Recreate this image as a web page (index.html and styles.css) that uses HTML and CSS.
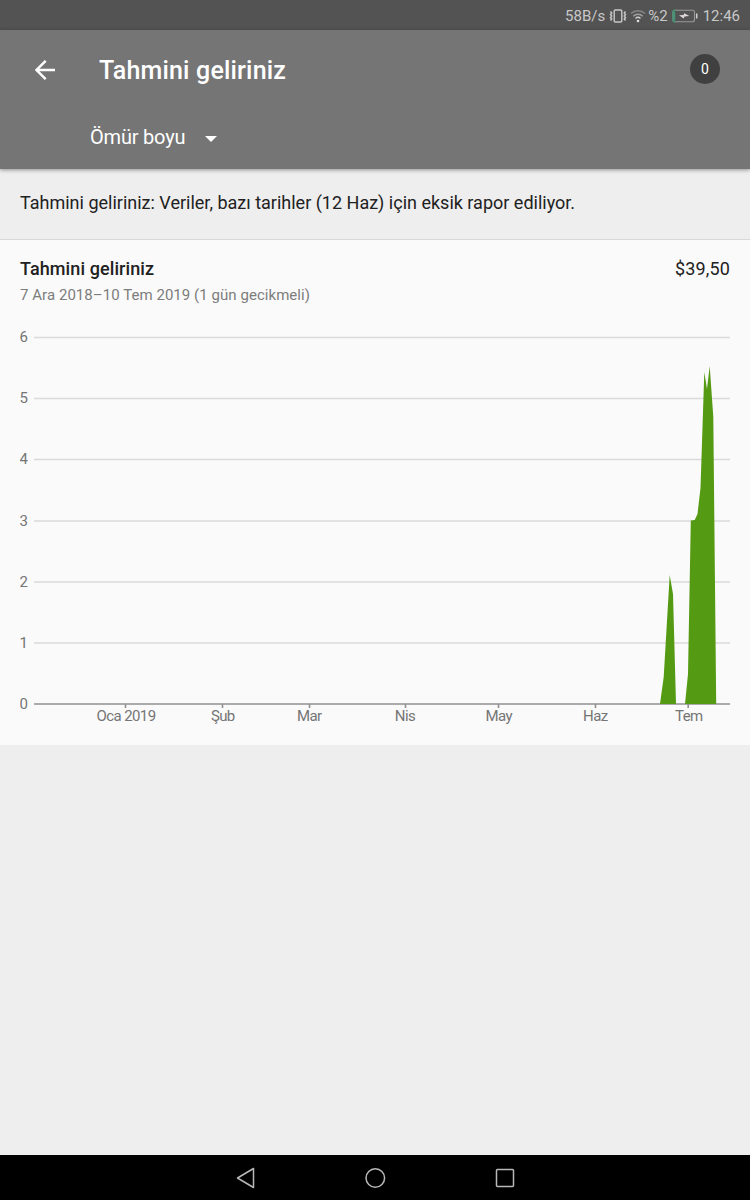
FILE: index.html
```html
<!DOCTYPE html>
<html lang="tr">

<head>
    <meta charset="UTF-8">
    <meta name="viewport" content="width=device-width, initial-scale=1.0">
    <title>Tahmini geliriniz</title>
    <link rel="stylesheet" href="styles.css">
</head>

<body>
    <div class="status-bar">
        <span class="speed">58B/s</span>
        <svg class="vibrate" width="18" height="14" viewBox="0 0 18 14" fill="none" stroke="#c8c8c8">
            <rect x="5.2" y="1" width="7.6" height="12" rx="1" stroke-width="1.4"/>
            <path d="M1.5 2.5l1.2 1.5-1.2 1.5 1.2 1.5-1.2 1.5 1.2 1.5-1.2 1.5M16.5 2.5l-1.2 1.5 1.2 1.5-1.2 1.5 1.2 1.5-1.2 1.5 1.2 1.5" stroke-width="1.5"/>
        </svg>
        <svg class="wifi" width="16" height="14" viewBox="0 0 16 14" fill="none" stroke-width="1.4">
            <path d="M1 4.6a10 10 0 0 1 14 0" stroke="#858585"/>
            <path d="M3.3 7.2a6.8 6.8 0 0 1 9.4 0" stroke="#a0a0a0"/>
            <path d="M5.5 9.4a3.7 3.7 0 0 1 5 0" stroke="#d0d0d0"/>
            <circle cx="8" cy="12" r="1.3" fill="#e0e0e0"/>
        </svg>
        <span class="percent">%2</span>
        <svg class="battery" width="26" height="14" viewBox="0 0 26 14">
            <rect x="1" y="1.2" width="21.5" height="11.6" rx="2" fill="none" stroke="#999" stroke-width="1.1"/>
            <path d="M3.6 1.2H3a2 2 0 0 0-2 2v7.6a2 2 0 0 0 2 2h.6" fill="none" stroke="#3f9a78" stroke-width="1.2"/>
            <path d="M2.6 2.8v8.4" stroke="#3f9a78" stroke-width="1.2"/>
            <path d="M7 6.2l4.5-.2.8-1.8 5 2.9-4.8.4-.8 1.9z" fill="#e0d8d8"/>
            <path d="M24.7 4.5v5" stroke="#d0d0d0" stroke-width="1.5"/>
        </svg>
        <span class="clock">12:46</span>
    </div>

    <div class="header">
        <div class="toolbar">
            <svg class="back" width="20" height="20" viewBox="0 0 20 20" fill="none" stroke="#fff" stroke-width="2.4">
                <path d="M20 10H2M10.7.8L1.5 10l9.2 9.2"/>
            </svg>
            <h1>Tahmini geliriniz</h1>
            <div class="badge">0</div>
        </div>
        <div class="period">
            <span>Ömür boyu</span>
            <div class="caret"></div>
        </div>
    </div>

    <div class="notice">Tahmini geliriniz: Veriler, bazı tarihler (12 Haz) için eksik rapor ediliyor.</div>

    <div class="card">
        <div class="card-title">
            <h2>Tahmini geliriniz</h2>
            <span class="total">$39,50</span>
        </div>
        <p class="dates">7 Ara 2018–10 Tem 2019 (1 gün gecikmeli)</p>

        <svg class="chart" width="710" height="410" viewBox="20 320 710 410">
            <path class="grid" d="M34 337.5H730M34 398.5H730M34 459.5H730M34 521H730M34 582H730M34 643H730"/>

            <g class="y-labels">
                <text x="19.5" y="342">6</text>
                <text x="19.5" y="403">5</text>
                <text x="19.5" y="464">4</text>
                <text x="19.5" y="526">3</text>
                <text x="19.5" y="587">2</text>
                <text x="19.5" y="648">1</text>
                <text x="19.5" y="709">0</text>
            </g>

            <path class="axis" d="M34 704H730M125.5 704v4M222.5 704v4M309.5 704v4M405.5 704v4M498.5 704v4M595.5 704v4M688.2 704v4"/>

            <g class="area">
                <polygon points="660,704 663.7,677 669.7,575 673,594 676,704"/>
                <polygon points="685,704 688,674 690.8,520.5 694.7,520 697.5,514 700.5,488 704.3,372 707,389 709.7,366 713.3,417 716.2,704"/>
            </g>

            <g class="x-labels">
                <text x="126" y="721">Oca 2019</text>
                <text x="222.8" y="721">Şub</text>
                <text x="309.3" y="721">Mar</text>
                <text x="405" y="721">Nis</text>
                <text x="498.8" y="721">May</text>
                <text x="595.3" y="721">Haz</text>
                <text x="688.8" y="721">Tem</text>
            </g>
        </svg>
    </div>

    <div class="nav-bar">
        <svg width="20" height="22" viewBox="0 0 20 22"><path d="M18.5 1.500v19L2.500 11z"/></svg>
        <svg width="22" height="22" viewBox="0 0 22 22"><circle cx="11.3" cy="11" r="9.300"/></svg>
        <svg width="20" height="22" viewBox="0 0 20 22"><rect x="1.500" y="2.500" width="17" height="17" rx="1"/></svg>
    </div>
</body>

</html>
```
FILE: styles.css
```css
* {
    box-sizing: border-box;
}

body {
    font-family: Roboto, "Liberation Sans", sans-serif;
    background-color: #eeeeee;
    color: #212121;
    display: flex;
    flex-direction: column;
    height: 1200px;
    margin: 0;
}

svg {
    display: block;
    flex: none;
}

h1, h2, p {
    margin: 0;
}

.status-bar {
    height: 30px;
    background-color: #535353;
    color: #c8c8c8;
    display: flex;
    align-items: center;
    justify-content: flex-end;
    padding: 1px 10px 0 0;
    font-size: 15px;
}

.vibrate {
    margin-left: 4px;
}

.wifi {
    margin-left: 3px;
}

.percent {
    margin-left: 2px;
}

.battery {
    margin-left: 4px;
}

.clock {
    margin-left: 5px;
}

.header {
    height: 139px;
    background-color: #757575;
    color: #fff;
    box-shadow: 0 1px 4px rgba(0, 0, 0, 0.4);
    position: relative;
}

.toolbar {
    height: 79px;
    display: flex;
    align-items: center;
    padding: 0 30px 0 35px;
}

.toolbar h1 {
    font-size: 25px;
    font-weight: 500;
    letter-spacing: 0.18px;
    margin: 1px 0 0 44px;
}

.badge {
    width: 30px;
    height: 30px;
    margin: -2px 0 0 auto;
    border-radius: 50%;
    background-color: #404040;
    font-size: 14px;
    line-height: 30px;
    text-align: center;
}

.period {
    height: 56px;
    display: flex;
    align-items: center;
    padding-left: 90px;
    font-size: 20px;
    letter-spacing: -0.2px;
}

.caret {
    margin: 3px 0 0 20px;
    border: 6px solid transparent;
    border-top-color: #fff;
    border-bottom: none;
}

.notice {
    height: 70px;
    line-height: 68px;
    padding-left: 20px;
    font-size: 18px;
}

.card {
    height: 506px;
    background-color: #fafafa;
    border-top: 1px solid #d8d8d8;
    padding: 18px 20px 0;
}

.card-title {
    display: flex;
    justify-content: space-between;
    line-height: 22px;
    font-size: 18px;
}

.card-title h2 {
    font-size: 18px;
    font-weight: 500;
    letter-spacing: 0.1px;
}

.total {
    letter-spacing: 0.15px;
}

.dates {
    margin-top: 5px;
    font-size: 15px;
    line-height: 20px;
    letter-spacing: 0.05px;
    color: #7d7d7d;
}

.chart {
    margin-top: 15px;
}

.chart text {
    font-size: 15px;
    fill: #757575;
}

.grid {
    stroke: #dadada;
    stroke-width: 1.5;
}

.axis {
    stroke: #919191;
    stroke-width: 1.6;
}

.area {
    fill: #549a12;
}

.chart .x-labels text {
    text-anchor: middle;
    letter-spacing: -0.6px;
}

.nav-bar {
    height: 45px;
    margin-top: auto;
    background-color: #000;
    display: flex;
    align-items: center;
    justify-content: center;
    gap: 109px;
}

.nav-bar svg {
    fill: none;
    stroke: #b8b8b8;
    stroke-width: 1.5;
    stroke-linejoin: round;
}
```
